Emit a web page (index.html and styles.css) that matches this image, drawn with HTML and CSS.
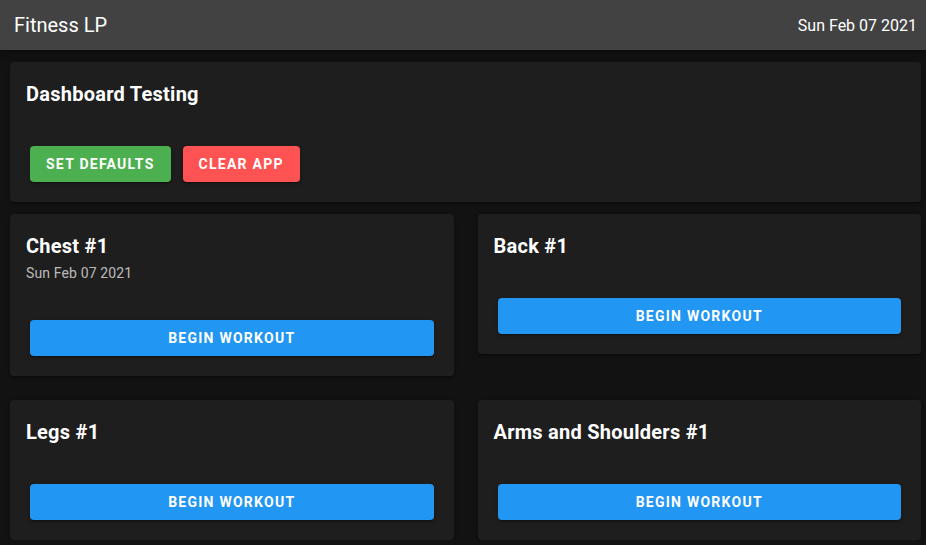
FILE: index.html
```html
<!DOCTYPE html>
<html lang="en">
<head>
<meta charset="utf-8">
<title>Fitness LP</title>
<link rel="stylesheet" href="styles.css">
</head>
<body>
<header class="app-bar">
  <div class="app-title">Fitness LP</div>
  <div class="app-date">Sun Feb 07 2021</div>
</header>
<main class="content">
  <section class="card">
    <div class="card-title">Dashboard Testing</div>
    <div class="card-actions">
      <button class="btn btn-green">Set Defaults</button>
      <button class="btn btn-red">Clear App</button>
    </div>
  </section>
  <div class="grid">
    <section class="card">
      <div class="card-title">Chest #1</div>
      <div class="card-subtitle">Sun Feb 07 2021</div>
      <div class="card-actions"><button class="btn btn-blue btn-block">Begin Workout</button></div>
    </section>
    <section class="card">
      <div class="card-title">Back #1</div>
      <div class="card-actions"><button class="btn btn-blue btn-block">Begin Workout</button></div>
    </section>
    <section class="card">
      <div class="card-title">Legs #1</div>
      <div class="card-actions"><button class="btn btn-blue btn-block">Begin Workout</button></div>
    </section>
    <section class="card">
      <div class="card-title">Arms and Shoulders #1</div>
      <div class="card-actions"><button class="btn btn-blue btn-block">Begin Workout</button></div>
    </section>
  </div>
</main>
</body>
</html>
```
FILE: styles.css
```css
* { box-sizing: border-box; }
html, body {
  margin: 0;
  padding: 0;
  background: #121212;
  font-family: Roboto, "Liberation Sans", sans-serif;
  color: #fff;
  overflow: hidden;
}
.app-bar {
  height: 50px;
  background: #424242;
  display: flex;
  align-items: center;
  justify-content: space-between;
  padding: 0 9px 0 14px;
  box-shadow: 0 2px 4px -1px rgba(0,0,0,.2), 0 4px 5px 0 rgba(0,0,0,.14), 0 1px 10px 0 rgba(0,0,0,.12);
}
.app-title {
  font-size: 20px;
  font-weight: 400;
}
.app-date {
  font-size: 16px;
  font-weight: 400;
}
.content {
  padding: 12px 5px 0 10px;
}
.card {
  background: #1e1e1e;
  border-radius: 4px;
  box-shadow: 0 3px 1px -2px rgba(0,0,0,.2), 0 2px 2px 0 rgba(0,0,0,.14), 0 1px 5px 0 rgba(0,0,0,.12);
}
.card-title {
  padding: 16px;
  font-size: 20px;
  line-height: 32px;
  font-weight: 700;
  letter-spacing: 0.0125em;
}
.card-subtitle {
  margin-top: -16px;
  padding: 0 16px 16px;
  font-size: 14px;
  line-height: 22px;
  font-weight: 400;
  letter-spacing: 0.01em;
  color: rgba(255,255,255,.7);
}
.card-actions {
  padding: 20px;
  display: flex;
  gap: 12px;
}
.btn {
  height: 36px;
  padding: 0 16px;
  border: none;
  border-radius: 4px;
  font-family: inherit;
  font-size: 14px;
  font-weight: 700;
  letter-spacing: 0.0892857em;
  text-transform: uppercase;
  color: #fff;
  box-shadow: 0 3px 1px -2px rgba(0,0,0,.2), 0 2px 2px 0 rgba(0,0,0,.14), 0 1px 5px 0 rgba(0,0,0,.12);
}
.btn-green { background: #4caf50; }
.btn-red { background: #ff5252; }
.btn-blue { background: #2196f3; }
.btn-block { flex: 1; }
.grid {
  margin-top: 12px;
  display: grid;
  grid-template-columns: 1fr 1fr;
  column-gap: 24px;
  row-gap: 24px;
  align-items: start;
}
```
